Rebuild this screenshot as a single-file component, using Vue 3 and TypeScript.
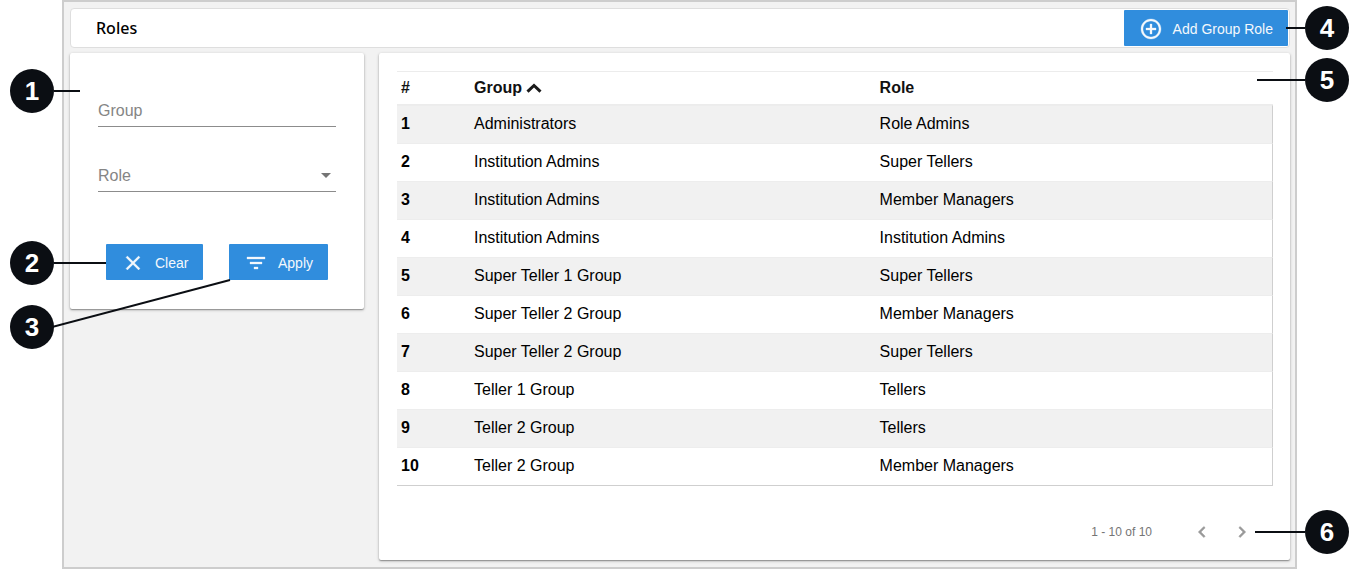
<script setup lang="ts">
import { ref } from 'vue'

interface GroupRole {
  group: string
  role: string
}

interface Callout {
  id: number
  side: 'left' | 'right'
}

const group = ref('')
const role = ref('')

const rows: GroupRole[] = [
  { group: 'Administrators', role: 'Role Admins' },
  { group: 'Institution Admins', role: 'Super Tellers' },
  { group: 'Institution Admins', role: 'Member Managers' },
  { group: 'Institution Admins', role: 'Institution Admins' },
  { group: 'Super Teller 1 Group', role: 'Super Tellers' },
  { group: 'Super Teller 2 Group', role: 'Member Managers' },
  { group: 'Super Teller 2 Group', role: 'Super Tellers' },
  { group: 'Teller 1 Group', role: 'Tellers' },
  { group: 'Teller 2 Group', role: 'Tellers' },
  { group: 'Teller 2 Group', role: 'Member Managers' },
]

const callouts: Callout[] = [
  { id: 1, side: 'left' },
  { id: 2, side: 'left' },
  { id: 3, side: 'left' },
  { id: 4, side: 'right' },
  { id: 5, side: 'right' },
  { id: 6, side: 'right' },
]

function clearFilter() {
  group.value = ''
  role.value = ''
}
</script>

<template>
  <div class="page">
    <main class="frame">
      <header class="titlebar">
        <h1>Roles</h1>
        <button type="button" class="btn">
          <svg class="icon" viewBox="0 0 24 24" aria-hidden="true">
            <path d="M13 7h-2v4H7v2h4v4h2v-4h4v-2h-4V7zm-1-5C6.48 2 2 6.48 2 12s4.480 10 10 10 10-4.480 10-10S17.520 2 12 2zm0 18c-4.410 0-8-3.590-8-8s3.590-8 8-8 8 3.590 8 8-3.590 8-8 8z" />
          </svg>
          Add Group Role
        </button>
      </header>

      <div class="columns">
        <form class="card filter" @submit.prevent>
          <div class="field">
            <input id="group" v-model="group" type="text" />
            <label v-if="!group" for="group">Group</label>
          </div>
          <div class="field">
            <select id="role" v-model="role">
              <option value=""></option>
              <option>Role Admins</option>
              <option>Super Tellers</option>
              <option>Member Managers</option>
              <option>Institution Admins</option>
              <option>Tellers</option>
            </select>
            <label v-if="!role" for="role">Role</label>
            <svg class="caret" viewBox="0 0 10 5" aria-hidden="true"><path d="M0 0h10L5 5z" /></svg>
          </div>
          <div class="actions">
            <button type="button" class="btn" @click="clearFilter">
              <svg class="icon" viewBox="0 0 24 24" aria-hidden="true">
                <path d="M19 6.410L17.590 5 12 10.590 6.410 5 5 6.410 10.590 12 5 17.590 6.410 19 12 13.410 17.590 19 19 17.590 13.410 12z" />
              </svg>
              Clear
            </button>
            <button type="submit" class="btn">
              <svg class="icon" viewBox="0 0 24 24" aria-hidden="true">
                <path d="M10 18h4v-2h-4v2zM3 6v2h18V6H3zm3 7h12v-2H6v2z" />
              </svg>
              Apply
            </button>
          </div>
        </form>

        <section class="card results">
          <table>
            <colgroup>
              <col class="col-num" />
              <col class="col-group" />
              <col />
            </colgroup>
            <thead>
              <tr>
                <th scope="col">#</th>
                <th scope="col" aria-sort="ascending">
                  Group
                  <svg class="sort" viewBox="0 0 16 10" aria-hidden="true"><path d="M1.500 8.700L8 2.500l6.500 6.200" /></svg>
                </th>
                <th scope="col">Role</th>
              </tr>
            </thead>
            <tbody>
              <tr v-for="(row, i) in rows" :key="i">
                <th scope="row">{{ i + 1 }}</th>
                <td>{{ row.group }}</td>
                <td>{{ row.role }}</td>
              </tr>
            </tbody>
          </table>
          <footer class="pager">
            <span class="range">1 - 10 of 10</span>
            <button type="button" aria-label="Previous page">
              <svg viewBox="0 0 24 24" aria-hidden="true"><path d="M15.410 7.410L14 6l-6 6 6 6 1.410-1.410L10.830 12z" /></svg>
            </button>
            <button type="button" aria-label="Next page">
              <svg viewBox="0 0 24 24" aria-hidden="true"><path d="M10 6L8.590 7.410 13.170 12l-4.580 4.590L10 18l6-6z" /></svg>
            </button>
          </footer>
        </section>
      </div>
    </main>

    <svg class="leader" width="180" height="52" viewBox="0 0 180 52" aria-hidden="true">
      <path d="M0 49L178 2" />
    </svg>
    <div v-for="c in callouts" :key="c.id" :class="['callout', c.side, 'callout-' + c.id]">
      <span class="badge">{{ c.id }}</span>
    </div>
  </div>
</template>

<style>
body {
  margin: 0;
  background: #fff;
}
</style>

<style scoped>
* {
  box-sizing: border-box;
}

.page {
  position: relative;
  padding: 0 63px 0 62px;
  font: 16px/20px "Liberation Sans", Arial, sans-serif;
  color: #000;
}

.frame {
  padding: 6px 5px 7px 6px;
  border: 2px solid #cdcdcd;
  background: #f2f2f2;
}

.titlebar {
  display: flex;
  align-items: center;
  justify-content: space-between;
  height: 40px;
  padding: 0 1px 0 25px;
  border: 1px solid #dedede;
  border-radius: 4px;
  background: #fff;
}

h1 {
  margin: 0;
  font: 500 16px/24px "Noto Sans", "Open Sans", sans-serif;
}

.btn {
  display: flex;
  align-items: center;
  gap: 10px;
  height: 36px;
  padding: 2px 15px 0;
  border: 0;
  border-radius: 1px;
  background: #308ddd;
  color: #f4f8fc;
  font: 14px/20px "Liberation Sans", Arial, sans-serif;
  white-space: nowrap;
  cursor: pointer;
}

.icon {
  width: 24px;
  height: 24px;
  fill: currentColor;
  stroke: currentColor;
  stroke-width: 0.3;
}

.columns {
  display: grid;
  grid-template-columns: 294px 1fr;
  align-items: start;
  gap: 15px;
  margin-top: 5px;
}

.card {
  border-radius: 2px;
  background: #fff;
  box-shadow: 0 1px 3px rgba(0, 0, 0, 0.3), 0 1px 1px rgba(0, 0, 0, 0.24);
}

.filter {
  padding: 41px 28px 29px;
}

.field {
  position: relative;
  height: 33px;
  margin-bottom: 32px;
  border-bottom: 1px solid #8c8c8c;
}

.field input,
.field select {
  display: block;
  width: 100%;
  height: 32px;
  padding: 0;
  border: 0;
  outline: 0;
  appearance: none;
  background: transparent;
  color: #222;
  font: inherit;
}

.field label {
  position: absolute;
  left: 0;
  top: 7px;
  color: #858585;
  pointer-events: none;
}

.caret {
  position: absolute;
  right: 5px;
  top: 14px;
  width: 10px;
  height: 5px;
  fill: #757575;
  pointer-events: none;
}

.actions {
  display: flex;
  justify-content: space-between;
  margin-top: 52px;
  padding: 0 8px;
}

.results {
  padding: 18px 17px 10px 18px;
}

table {
  width: 100%;
  table-layout: fixed;
  border-collapse: separate;
  border-spacing: 0;
}

.col-num {
  width: 73px;
}

.col-group {
  width: 46.300%;
}

th,
td {
  padding: 0 4px;
  text-align: left;
}

thead th {
  height: 34px;
  border-top: 1px solid #ececec;
  border-bottom: 1px solid #ececec;
  color: #111;
}

.sort {
  width: 16px;
  height: 10px;
  fill: none;
  stroke: #1a1a1a;
  stroke-width: 3;
}

tbody th,
tbody td {
  height: 38px;
  padding-bottom: 2px;
  border-top: 1px solid #ededed;
}

tbody tr:nth-child(odd) {
  background: #f1f1f1;
}

tbody td:last-child {
  border-right: 1px solid #cfcfcf;
}

tbody tr:last-child > * {
  height: 39px;
  border-bottom: 1px solid #cfcfcf;
}

.pager {
  display: flex;
  align-items: center;
  justify-content: flex-end;
  margin-top: 28px;
  padding-right: 11px;
}

.range {
  margin-right: 30px;
  color: #757575;
  font-size: 12px;
}

.pager button {
  display: flex;
  align-items: center;
  justify-content: center;
  width: 40px;
  height: 36px;
  padding: 0;
  border: 0;
  background: transparent;
}

.pager svg {
  width: 22px;
  height: 22px;
  fill: #999;
  stroke: #999;
  stroke-width: 0.6;
}

/* Numbered annotations laid over the screen */
.callout {
  position: absolute;
  display: flex;
  align-items: center;
}

.callout::after {
  content: "";
  height: 2px;
  background: #0b0e13;
}

.left {
  left: 10px;
}

.right {
  right: 11px;
  flex-direction: row-reverse;
}

.badge {
  width: 44px;
  height: 44px;
  border-radius: 50%;
  background: #0b0e13;
  color: #fff;
  font-size: 26px;
  font-weight: bold;
  line-height: 44px;
  text-align: center;
}

.callout-1 {
  top: 69px;
}

.callout-1::after {
  width: 26px;
}

.callout-2 {
  top: 241px;
}

.callout-2::after {
  width: 52px;
}

.callout-3 {
  top: 305px;
}

.callout-4 {
  top: 6px;
}

.callout-4::after {
  width: 19px;
}

.callout-5 {
  top: 58px;
}

.callout-5::after {
  width: 48px;
}

.callout-6 {
  top: 510px;
}

.callout-6::after {
  width: 50px;
}

.leader {
  position: absolute;
  left: 52px;
  top: 278px;
  fill: none;
  stroke: #0b0e13;
  stroke-width: 2;
}
</style>
